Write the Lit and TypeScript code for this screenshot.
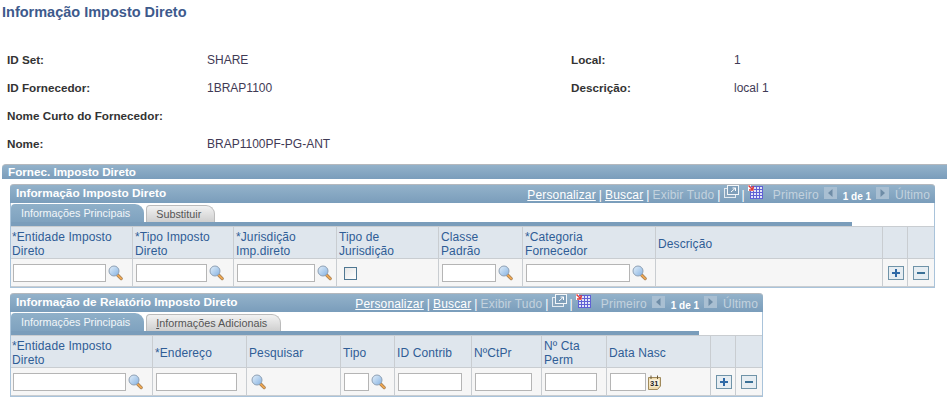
import { LitElement, html, css, svg } from "lit";
import { customElement } from "lit/decorators.js";

const lookup = html`<svg class="ico" width="15" height="16" viewBox="0 0 15 16">
  <defs><linearGradient id="gl" x1="0" y1="0" x2="1" y2="1"><stop offset="0" stop-color="#e4f0fa"/><stop offset="1" stop-color="#85b2e2"/></linearGradient></defs>
  <path d="M9.6 10 L13.2 13.6" stroke="#a8845a" stroke-width="3.2" stroke-linecap="round"/>
  <path d="M9.8 10.2 L13.2 13.6" stroke="#f2a850" stroke-width="1.6" stroke-linecap="round"/>
  <circle cx="6" cy="6" r="5" fill="url(#gl)" stroke="#8ea0b4"/>
</svg>`;

const calendar = html`<svg class="ico cal" width="13" height="15" viewBox="0 0 13 15">
  <path d="M0.5 2.5H12.5V11L9.5 14.5H0.5Z" fill="#f0dcae" stroke="#a08a5c"/>
  <path d="M3 .5V4M9.5 .5V4" stroke="#6b5a38" stroke-width="1"/>
  <rect x="1.5" y="4.5" width="9.5" height="7" fill="#fbf4e0"/>
  <text x="2" y="11" font-family="Liberation Sans" font-weight="700" font-size="7.5" fill="#222">31</text>
</svg>`;

const plus = html`<svg class="btn" width="16" height="14" viewBox="0 0 16 14">
  <rect x=".5" y=".5" width="15" height="13" fill="#e6edf2" stroke="#6f93a8"/>
  <path d="M8 3V11M4 7H12" stroke="#2f69a6" stroke-width="2"/>
</svg>`;

const minus = html`<svg class="btn" width="16" height="14" viewBox="0 0 16 14">
  <rect x=".5" y=".5" width="15" height="13" fill="#e6edf2" stroke="#6f93a8"/>
  <path d="M4 7H12" stroke="#3a7096" stroke-width="2"/>
</svg>`;

const popout = html`<svg class="nico" width="15" height="14" viewBox="0 0 15 14">
  <rect x=".5" y="3.5" width="11" height="9" fill="#8aa6be" stroke="#e4ebf1"/>
  <rect x="3.5" y=".5" width="11" height="9" fill="#7f9fba" stroke="#f4f7fa"/>
  <path d="M7 7L11.5 3M8.5 3H11.5V6" stroke="#fff" fill="none"/>
</svg>`;

const gridIcon = html`<svg class="nico grid-ico" width="15" height="14" viewBox="0 0 15 14">
  <rect x="2" y="1" width="13" height="13" fill="#6060d4"/>
  ${[3, 6, 9, 12].map((x) =>
    [2, 5, 8, 11].map((y) => svg`<rect x=${x} y=${y} width="2" height="2" fill="#e2e5f8"/>`)
  )}
  <path d="M0 0H3V3H6V6H0Z" fill="#fff"/>
  <path d="M.5 .5 L4.5 4.5 M1 5 H5 V1" stroke="#e03a3a" stroke-width="1.5" fill="none"/>
</svg>`;

const arrowL = html`<svg class="nico arr al" width="13" height="12" viewBox="0 0 13 12">
  <rect width="13" height="12" fill="#a9bfd2"/><path d="M8.5 2V10L4 6Z" fill="#6e8ca6"/>
</svg>`;
const arrowR = html`<svg class="nico arr ar" width="13" height="12" viewBox="0 0 13 12">
  <rect width="13" height="12" fill="#a9bfd2"/><path d="M4.5 2V10L9 6Z" fill="#6e8ca6"/>
</svg>`;

type Cell =
  | { k: "input"; w: number; icon?: "lookup" | "cal" }
  | { k: "check" }
  | { k: "icon" }
  | { k: "empty" }
  | { k: "plus" }
  | { k: "minus" };

interface Col {
  w: number;
  head: string[];
  cell: Cell;
}

const grid1: Col[] = [
  { w: 122, head: ["*Entidade Imposto", "Direto"], cell: { k: "input", w: 93, icon: "lookup" } },
  { w: 101, head: ["*Tipo Imposto", "Direto"], cell: { k: "input", w: 71, icon: "lookup" } },
  { w: 103, head: ["*Jurisdição", "Imp.direto"], cell: { k: "input", w: 78, icon: "lookup" } },
  { w: 102, head: ["Tipo de", "Jurisdição"], cell: { k: "check" } },
  { w: 84, head: ["Classe", "Padrão"], cell: { k: "input", w: 54, icon: "lookup" } },
  { w: 133, head: ["*Categoria", "Fornecedor"], cell: { k: "input", w: 104, icon: "lookup" } },
  { w: 227, head: ["Descrição"], cell: { k: "empty" } },
  { w: 25, head: [], cell: { k: "plus" } },
  { w: 26, head: [], cell: { k: "minus" } },
];

const grid2: Col[] = [
  { w: 142, head: ["*Entidade Imposto", "Direto"], cell: { k: "input", w: 113, icon: "lookup" } },
  { w: 94, head: ["*Endereço"], cell: { k: "input", w: 81 } },
  { w: 94, head: ["Pesquisar"], cell: { k: "icon" } },
  { w: 54, head: ["Tipo"], cell: { k: "input", w: 25, icon: "lookup" } },
  { w: 77, head: ["ID Contrib"], cell: { k: "input", w: 64 } },
  { w: 70, head: ["NºCtPr"], cell: { k: "input", w: 57 } },
  { w: 65, head: ["Nº Cta", "Perm"], cell: { k: "input", w: 52 } },
  { w: 104, head: ["Data Nasc"], cell: { k: "input", w: 36, icon: "cal" } },
  { w: 25, head: [], cell: { k: "plus" } },
  { w: 26, head: [], cell: { k: "minus" } },
];

@customElement("app-root")
export class AppRoot extends LitElement {
  static styles = css`
    :host {
      display: block;
      width: 947px;
      height: 409px;
      overflow: hidden;
      background: #fff;
      font-family: "Liberation Sans", Arial, sans-serif;
      font-size: 12px;
      color: #333;
    }
    .title {
      font-size: 14.5px;
      font-weight: 700;
      color: #3d5a8c;
      height: 24px;
      line-height: 24px;
      padding-left: 2px;
    }
    .info {
      display: grid;
      grid-template-columns: 200px 364px 163px 1fr;
      grid-auto-rows: 28px;
      padding: 21px 0 0 7px;
      height: 119px;
      align-items: center;
    }
    .lbl {
      color: #333;
      font-weight: 700;
      font-size: 11.7px;
    }
    .val {
      color: #3f3a55;
      margin-top: 1px;
    }
    .section {
      margin-left: 2px;
      height: 15px;
      line-height: 13px;
      box-sizing: border-box;
      border-top: 1px solid #b4b8bd;
      border-top-left-radius: 4px;
      background: linear-gradient(#93b2ca, #7a9dbb);
      color: #fff;
      font-weight: 700;
      font-size: 11.7px;
      padding-left: 6px;
    }
    .grid {
      margin-left: 10px;
      margin-top: 5px;
      box-sizing: border-box;
      border: 1px solid #a9c3da;
      border-top: none;
      border-radius: 4px 4px 0 0;
      background: #fff;
    }
    .bar {
      margin: 0 -1px;
      height: 19px;
      box-sizing: border-box;
      border-top: 1px solid #b4b8bd;
      border-radius: 4px 4px 0 0;
      background: linear-gradient(#93b2ca, #7a9dbb);
      display: flex;
      color: #fff;
      padding: 0 5px 0 6px;
    }
    .bar-title {
      font-weight: 700;
      font-size: 11.8px;
      line-height: 17px;
      flex: 1;
    }
    .nav {
      display: flex;
      align-items: flex-start;
      gap: 3px;
      color: #fff;
      line-height: 14px;
      letter-spacing: 0.15px;
    }
    .nav a,
    .nav span {
      margin-top: 3px;
    }
    .nav a {
      color: #fff;
      text-decoration: underline;
    }
    .nav .off {
      color: #c3d2de;
    }
    .nico {
      display: block;
      margin-top: 0;
      flex: none;
    }
    .nav .arr {
      margin-top: 2px;
    }
    .nav .al {
      margin-left: 2px;
    }
    .nav .ar {
      margin-right: 3px;
    }
    .grid-ico {
      margin: 0 7px 0 0;
    }
    .nav .pg {
      font-size: 10px;
      font-weight: 700;
      letter-spacing: 0;
      margin: 5px 2px 0 3px;
    }
    .tabs {
      height: 19px;
      display: flex;
      align-items: flex-end;
      gap: 2px;
      font-size: 10.8px;
    }
    .tab {
      height: 17px;
      box-sizing: border-box;
      line-height: 16px;
      border-radius: 4px 9px 0 0;
      border: 1px solid #bbb;
      border-bottom: none;
      background: linear-gradient(#f2f2f2, #cfcfcf);
      color: #555;
      padding: 0 13px 0 9px;
    }
    .tab.on {
      height: 18px;
      line-height: 18px;
      border: none;
      background: linear-gradient(#8fb0c9, #7fa2bf);
      color: #f2f6f9;
      padding: 0 14px 0 10px;
    }
    .tab u {
      text-decoration: underline;
    }
    .rule {
      height: 4px;
      background: #7a9dbb;
    }
    .cols {
      display: grid;
    }
    .th {
      height: 33px;
      box-sizing: border-box;
      background: #dfe6ed;
      border-right: 1px solid #c9cdd1;
      border-bottom: 1px solid #c9cdd1;
      border-top: 1px solid #c9cdd1;
      color: #2f5d96;
      line-height: 14px;
      padding: 2px 1px 0 2px;
      display: flex;
      flex-direction: column;
      justify-content: center;
      letter-spacing: 0.1px;
    }
    .th.first {
      padding-left: 1px;
    }
    .td {
      height: 28px;
      box-sizing: border-box;
      background: #f6f6f6;
      border-right: 1px solid #c9cdd1;
      border-bottom: 1px solid #c9cdd1;
      padding: 5px 0 0 3px;
      display: flex;
      align-items: flex-start;
      gap: 2px;
    }
    .td.first {
      padding-left: 2px;
    }
    .th.last,
    .td.last {
      border-right: none;
    }
    .inp {
      height: 18px;
      box-sizing: border-box;
      border: 1px solid #b5b5b5;
      background: #fff;
    }
    .ico {
      display: block;
      flex: none;
      margin-top: 1px;
    }
    .cal {
      margin-top: 2px;
    }
    .chk {
      width: 13px;
      height: 13px;
      margin: 3px 0 0 4px;
      box-sizing: border-box;
      border: 1px solid #4f7792;
      background: linear-gradient(135deg, #e6e6e6, #fff);
    }
    .btn {
      display: block;
      margin: 2px 0 0 2px;
    }
    .icon-only {
      margin-left: 1px;
    }
  `;

  private cell(c: Cell) {
    switch (c.k) {
      case "input":
        return html`<div class="inp" style="width:${c.w}px"></div>
          ${c.icon === "lookup" ? lookup : c.icon === "cal" ? calendar : ""}`;
      case "check":
        return html`<div class="chk"></div>`;
      case "icon":
        return html`<span class="icon-only">${lookup}</span>`;
      case "plus":
        return plus;
      case "minus":
        return minus;
      default:
        return "";
    }
  }

  private nav() {
    return html`<div class="nav">
      <a>Personalizar</a><span>|</span><a>Buscar</a><span>|</span>
      <span class="off">Exibir Tudo</span><span>|</span>${popout}<span>|</span>${gridIcon}
      <span class="off">Primeiro</span>${arrowL}<span class="pg">1 de 1</span>${arrowR}
      <span class="off">Último</span>
    </div>`;
  }

  private pos(i: number, n: number) {
    return i === 0 ? "first" : i === n - 1 ? "last" : "";
  }

  private renderGrid(title: string, tabs: unknown[], cols: Col[], width: number, rule: number) {
    const tpl = cols.map((c) => c.w + "px").join(" ");
    return html`<div class="grid" style="width:${width}px">
      <div class="bar"><span class="bar-title">${title}</span>${this.nav()}</div>
      <div class="tabs">
        ${tabs.map((t, i) => html`<div class="tab ${i === 0 ? "on" : ""}">${t}</div>`)}
      </div>
      <div class="rule" style="width:${rule}px"></div>
      <div class="cols" style="grid-template-columns:${tpl}">
        ${cols.map(
          (c, i) =>
            html`<div class="th ${this.pos(i, cols.length)}">${c.head.map((h) => html`<span>${h}</span>`)}</div>`
        )}
        ${cols.map((c, i) => html`<div class="td ${this.pos(i, cols.length)}">${this.cell(c.cell)}</div>`)}
      </div>
    </div>`;
  }

  render() {
    return html`
      <div class="title">Informação Imposto Direto</div>
      <div class="info">
        <span class="lbl">ID Set:</span><span class="val">SHARE</span>
        <span class="lbl">Local:</span><span class="val">1</span>
        <span class="lbl">ID Fornecedor:</span><span class="val">1BRAP1100</span>
        <span class="lbl">Descrição:</span><span class="val">local 1</span>
        <span class="lbl">Nome Curto do Fornecedor:</span><span class="val"></span>
        <span></span><span></span>
        <span class="lbl">Nome:</span><span class="val">BRAP1100PF-PG-ANT</span>
      </div>
      <div class="section">Fornec. Imposto Direto</div>
      ${this.renderGrid("Informação Imposto Direto", ["Informações Principais", "Substituir"], grid1, 925, 841)}
      ${this.renderGrid(
        "Informação de Relatório Imposto Direto",
        ["Informações Principais", html`<u>I</u>nformações Adicionais`],
        grid2,
        753,
        688
      )}
    `;
  }
}
